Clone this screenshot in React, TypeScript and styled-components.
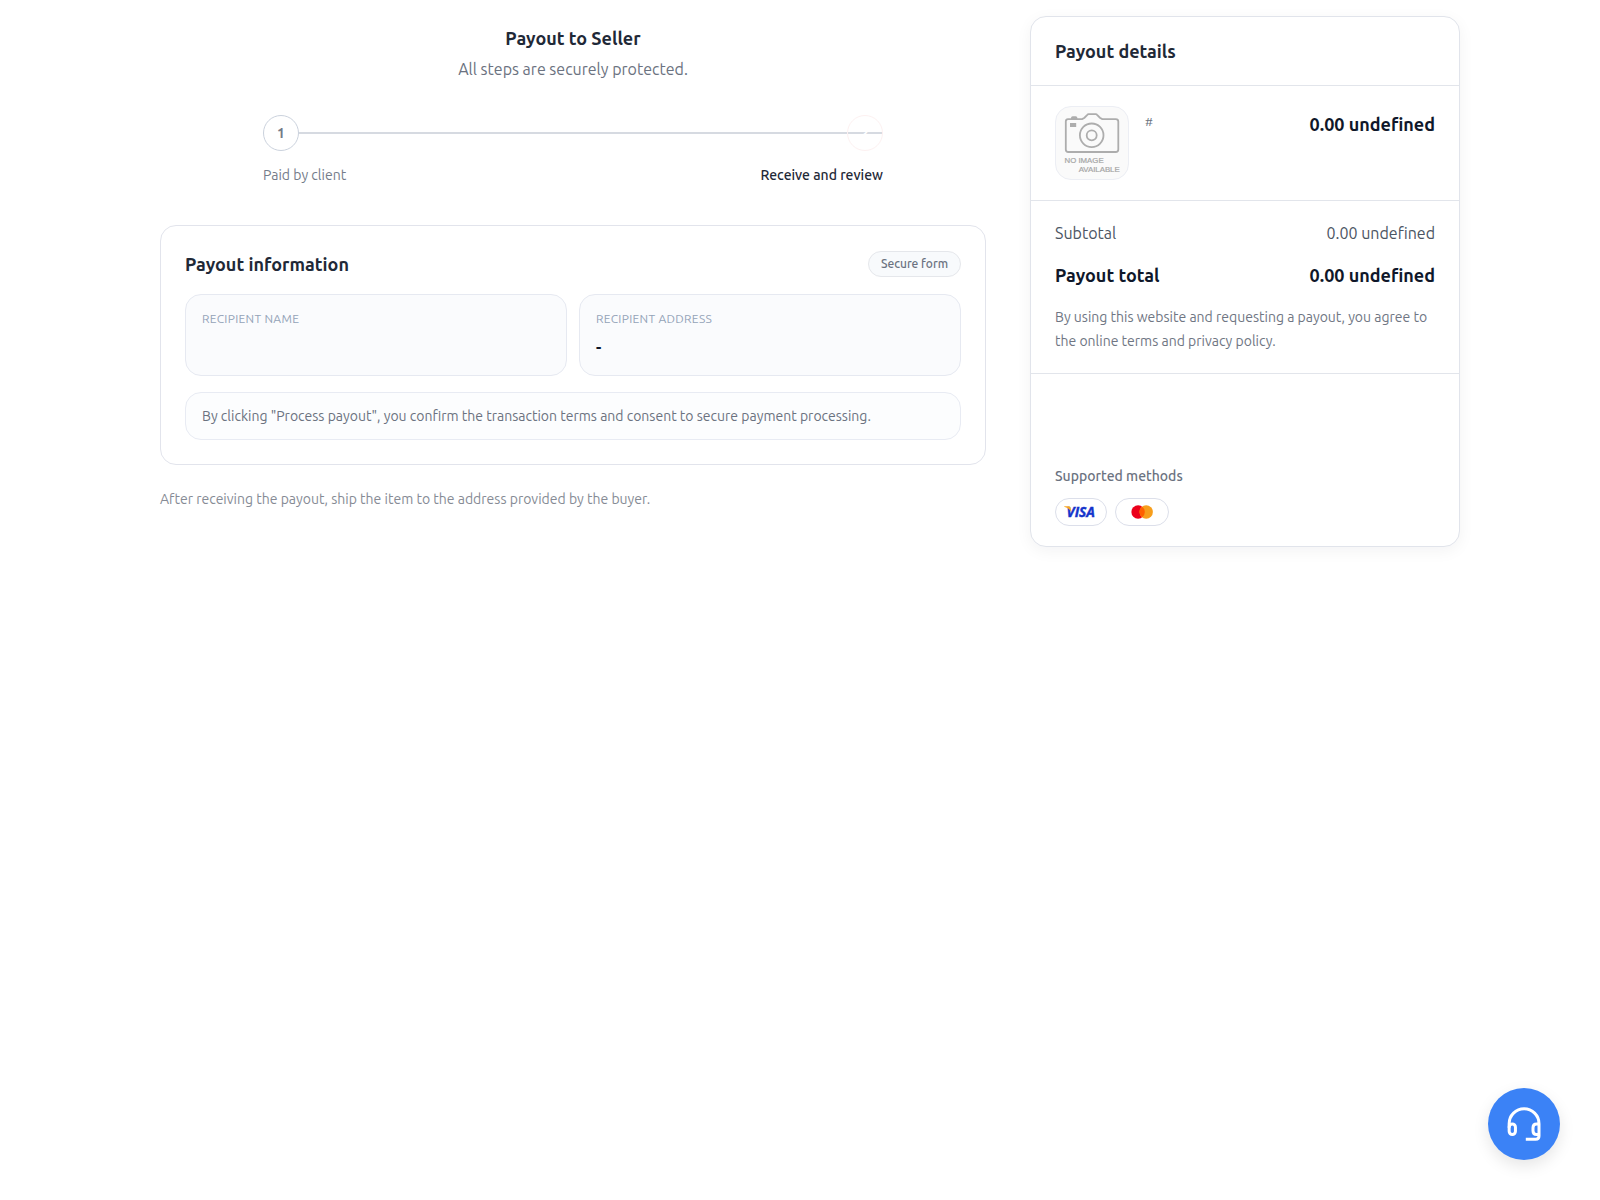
import React from "react";
import styled, { createGlobalStyle } from "styled-components";

const GlobalStyle = createGlobalStyle`
  *, *::before, *::after { box-sizing: border-box; }
  body {
    margin: 0;
    background: #ffffff;
    color: #0f172a;
    font-family: Ubuntu, "Noto Sans", sans-serif;
    font-size: 16px;
    line-height: 24px;
  }
  h1, h2, p { margin: 0; }
`;

const Page = styled.main`
  display: grid;
  grid-template-columns: 826px 430px;
  column-gap: 44px;
  align-items: start;
  padding: 16px 140px 16px 160px;
`;

const Column = styled.section`
  display: flex;
  flex-direction: column;
`;

const Intro = styled.header`
  display: flex;
  flex-direction: column;
  align-items: center;
  gap: 5px;
  padding-top: 8px;
`;

const Title = styled.h1`
  font-size: 18px;
  font-weight: 600;
  line-height: 28px;
  color: #1f2937;
`;

const Subtitle = styled.p`
  color: #6b7280;
`;

const Stepper = styled.div`
  display: flex;
  flex-direction: column;
  gap: 14px;
  width: 620px;
  margin: 34px auto 0;
`;

const Track = styled.div`
  position: relative;
  display: flex;
  justify-content: space-between;

  &::before {
    content: "";
    position: absolute;
    left: 0;
    right: 0;
    top: 17px;
    height: 2px;
    background: #d6dae1;
  }
`;

const Step = styled.span<{ $current?: boolean }>`
  position: relative;
  display: grid;
  place-items: center;
  width: 36px;
  height: 36px;
  border: 1px solid ${(p) => (p.$current ? "#fdf1f1" : "#cbd2dd")};
  border-radius: 50%;
  background: ${(p) => (p.$current ? "transparent" : "#ffffff")};
  color: ${(p) => (p.$current ? "#ffffff" : "#747b88")};
  font-size: 14px;
  font-weight: 600;
  line-height: 20px;
`;

const StepLabels = styled.div`
  display: flex;
  justify-content: space-between;
`;

const StepLabel = styled.span<{ $current?: boolean }>`
  font-size: 14px;
  line-height: 20px;
  font-weight: ${(p) => (p.$current ? 500 : 400)};
  color: ${(p) => (p.$current ? "#1f2937" : "#757c8a")};
`;

const InfoCard = styled.div`
  display: flex;
  flex-direction: column;
  gap: 16px;
  margin-top: 40px;
  padding: 24px;
  border: 1px solid #e2e4ec;
  border-radius: 16px;
  background: #ffffff;
`;

const CardHeader = styled.div`
  display: flex;
  align-items: center;
  justify-content: space-between;
  height: 28px;
`;

const Heading = styled.h2`
  font-size: 18px;
  font-weight: 600;
  line-height: 28px;
  color: #1f2937;
`;

const Badge = styled.span`
  padding: 4px 12px;
  border: 1px solid #e5e7eb;
  border-radius: 999px;
  background: #f8fafc;
  color: #6b7280;
  font-size: 12px;
  font-weight: 500;
  line-height: 16px;
`;

const Fields = styled.div`
  display: grid;
  grid-template-columns: 1fr 1fr;
  gap: 12px;
`;

const Field = styled.div`
  display: flex;
  flex-direction: column;
  gap: 8px;
  padding: 16px;
  border: 1px solid #e6e9f1;
  border-radius: 16px;
  background: #fafbfd;
`;

const FieldLabel = styled.span`
  font-size: 12px;
  line-height: 16px;
  letter-spacing: 0.025em;
  text-transform: uppercase;
  color: #94a3b8;
`;

const FieldValue = styled.span`
  min-height: 24px;
  font-weight: 600;
  color: #0f172a;
`;

const Consent = styled.p`
  padding: 12px 16px;
  border: 1px solid #e8ebf3;
  border-radius: 16px;
  background: #fcfdfe;
  color: #6b7280;
  font-size: 14px;
  line-height: 22px;
`;

const ShippingNote = styled.p`
  margin-top: 24px;
  font-size: 14px;
  line-height: 20px;
  color: #868b95;
`;

const Details = styled.aside`
  border: 1px solid #e1e4eb;
  border-radius: 16px;
  background: #ffffff;
  box-shadow: 0 4px 16px rgba(15, 23, 42, 0.05);
`;

const Section = styled.div`
  display: flex;
  flex-direction: column;
  padding: 20px 24px;

  & + & {
    border-top: 1px solid #e2e5eb;
  }
`;

const Product = styled.div`
  display: flex;
  align-items: flex-start;
  gap: 16px;
`;

const Thumbnail = styled.div`
  width: 74px;
  height: 74px;
  overflow: hidden;
  border: 1px solid #eceef4;
  border-radius: 16px;
  background: #fafafa;

  svg { display: block; }
`;

const ProductId = styled.span`
  flex: 1;
  padding-top: 8px;
  font-size: 12px;
  line-height: 16px;
  color: #6b7280;
`;

const Price = styled.strong`
  padding-top: 4px;
  font-size: 18px;
  font-weight: 600;
  line-height: 28px;
`;

const SummaryRow = styled.div<{ $total?: boolean }>`
  display: flex;
  justify-content: space-between;
  margin-top: ${(p) => (p.$total ? "16px" : "0")};
  font-size: ${(p) => (p.$total ? "18px" : "16px")};
  font-weight: ${(p) => (p.$total ? 600 : 400)};
  line-height: ${(p) => (p.$total ? "28px" : "24px")};
  color: ${(p) => (p.$total ? "#0f172a" : "#4b5563")};
`;

const Terms = styled.p`
  margin-top: 16px;
  font-size: 14px;
  line-height: 24px;
  color: #6f7683;
`;

const Methods = styled(Section)`
  padding-top: 92px;
`;

const MethodsTitle = styled.span`
  font-size: 14px;
  font-weight: 500;
  line-height: 20px;
  color: #6b7280;
`;

const MethodList = styled.div`
  display: flex;
  gap: 8px;
  margin-top: 12px;
`;

const Method = styled.span<{ $width: number }>`
  display: grid;
  place-items: center;
  width: ${(p) => p.$width}px;
  height: 28px;
  border: 1px solid #dcdfea;
  border-radius: 999px;

  svg { display: block; }
`;

const SupportButton = styled.button`
  position: fixed;
  right: 40px;
  bottom: 40px;
  display: grid;
  place-items: center;
  width: 72px;
  height: 72px;
  padding: 0;
  border: 0;
  border-radius: 50%;
  background: #3b82f6;
  color: #ffffff;
  box-shadow: 0 6px 16px rgba(0, 0, 0, 0.1);
`;

const NoImage = () => (
  <svg width="72" height="72" viewBox="0 0 72 72" fill="none">
    <g stroke="#adadad" strokeWidth="1.8">
      <path d="M12 12.1h14.2l2.3-1.4 2.8-2.9q.5-.6 1.2-.6h7.4q.7 0 1.2.6l2.8 2.9 2.3 1.4h13.6q2.5 0 2.5 2.5v27.9q0 2.5-2.5 2.5H12.3q-2.5 0-2.5-2.5V14.6q0-2.5 2.2-2.5Z" />
      <circle cx="35.7" cy="28.3" r="11.8" />
      <circle cx="35.7" cy="28.3" r="5" />
    </g>
    <path d="M15 11.9v-.8q0-1.9 1.7-1.9h3q1.7 0 1.7 1.9v.8ZM14 16h6.2v4H14Z" fill="#adadad" />
    <g
      fill="#a6a6a6"
      stroke="#a6a6a6"
      strokeWidth=".2"
      fontFamily='"Liberation Sans", Arial, sans-serif'
      fontSize="7.2"
    >
      <text x="8.6" y="56.4" textLength="39" lengthAdjust="spacingAndGlyphs">NO IMAGE</text>
      <text x="22.7" y="65.4" textLength="41" lengthAdjust="spacingAndGlyphs">AVAILABLE</text>
    </g>
  </svg>
);

const VisaLogo = () => (
  <svg width="36" height="24" viewBox="0 0 36 24">
    <text
      x="3.6"
      y="16.9"
      fill="#1434cb"
      stroke="#1434cb"
      strokeWidth=".4"
      fontFamily='"Open Sans", sans-serif'
      fontSize="13.6"
      fontStyle="italic"
      fontWeight="700"
      textLength="28.4"
      lengthAdjust="spacingAndGlyphs"
    >
      VISA
    </text>
    <path d="M1.2 6.2h4.5q1.6 0 1.9 1.6l.7 4.2Q6.2 8.2 1.2 6.8Z" fill="#f7a823" />
  </svg>
);

const MastercardLogo = () => (
  <svg width="34" height="14" viewBox="0 0 34 14">
    <circle cx="13.1" cy="7" r="6.7" fill="#eb001b" />
    <circle cx="21.2" cy="7" r="6.7" fill="#f79e1b" />
    <path d="M17.15 1.65a6.7 6.7 0 0 1 0 10.7a6.7 6.7 0 0 1 0-10.7Z" fill="#ff5f00" />
  </svg>
);

const HeadsetIcon = () => (
  <svg width="36" height="36" viewBox="0 0 24 24" fill="none" stroke="currentColor" strokeWidth="2">
    <path d="M2.1 14.5V11.8a9.95 9.95 0 0 1 19.9 0v8.2q0 2.2-2.2 2.2h-6.6" />
    <rect x="2.1" y="12" width="4.2" height="7" rx="2.1" />
    <path d="M22 12h-1.6q-2.4 0-2.4 2.5v2q0 2.5 2.4 2.5H22" />
  </svg>
);

export default function App() {
  return (
    <>
      <GlobalStyle />
      <Page>
        <Column>
          <Intro>
            <Title>Payout to Seller</Title>
            <Subtitle>All steps are securely protected.</Subtitle>
          </Intro>
          <Stepper>
            <Track>
              <Step>1</Step>
              <Step $current>2</Step>
            </Track>
            <StepLabels>
              <StepLabel>Paid by client</StepLabel>
              <StepLabel $current>Receive and review</StepLabel>
            </StepLabels>
          </Stepper>
          <InfoCard>
            <CardHeader>
              <Heading>Payout information</Heading>
              <Badge>Secure form</Badge>
            </CardHeader>
            <Fields>
              <Field>
                <FieldLabel>Recipient name</FieldLabel>
                <FieldValue />
              </Field>
              <Field>
                <FieldLabel>Recipient address</FieldLabel>
                <FieldValue>-</FieldValue>
              </Field>
            </Fields>
            <Consent>
              By clicking "Process payout", you confirm the transaction terms and consent to secure payment processing.
            </Consent>
          </InfoCard>
          <ShippingNote>After receiving the payout, ship the item to the address provided by the buyer.</ShippingNote>
        </Column>

        <Details>
          <Section>
            <Heading>Payout details</Heading>
          </Section>
          <Section>
            <Product>
              <Thumbnail>
                <NoImage />
              </Thumbnail>
              <ProductId>#</ProductId>
              <Price>0.00 undefined</Price>
            </Product>
          </Section>
          <Section>
            <SummaryRow>
              <span>Subtotal</span>
              <span>0.00 undefined</span>
            </SummaryRow>
            <SummaryRow $total>
              <span>Payout total</span>
              <span>0.00 undefined</span>
            </SummaryRow>
            <Terms>By using this website and requesting a payout, you agree to the online terms and privacy policy.</Terms>
          </Section>
          <Methods>
            <MethodsTitle>Supported methods</MethodsTitle>
            <MethodList>
              <Method $width={52}>
                <VisaLogo />
              </Method>
              <Method $width={54}>
                <MastercardLogo />
              </Method>
            </MethodList>
          </Methods>
        </Details>
      </Page>
      <SupportButton aria-label="Support">
        <HeadsetIcon />
      </SupportButton>
    </>
  );
}
